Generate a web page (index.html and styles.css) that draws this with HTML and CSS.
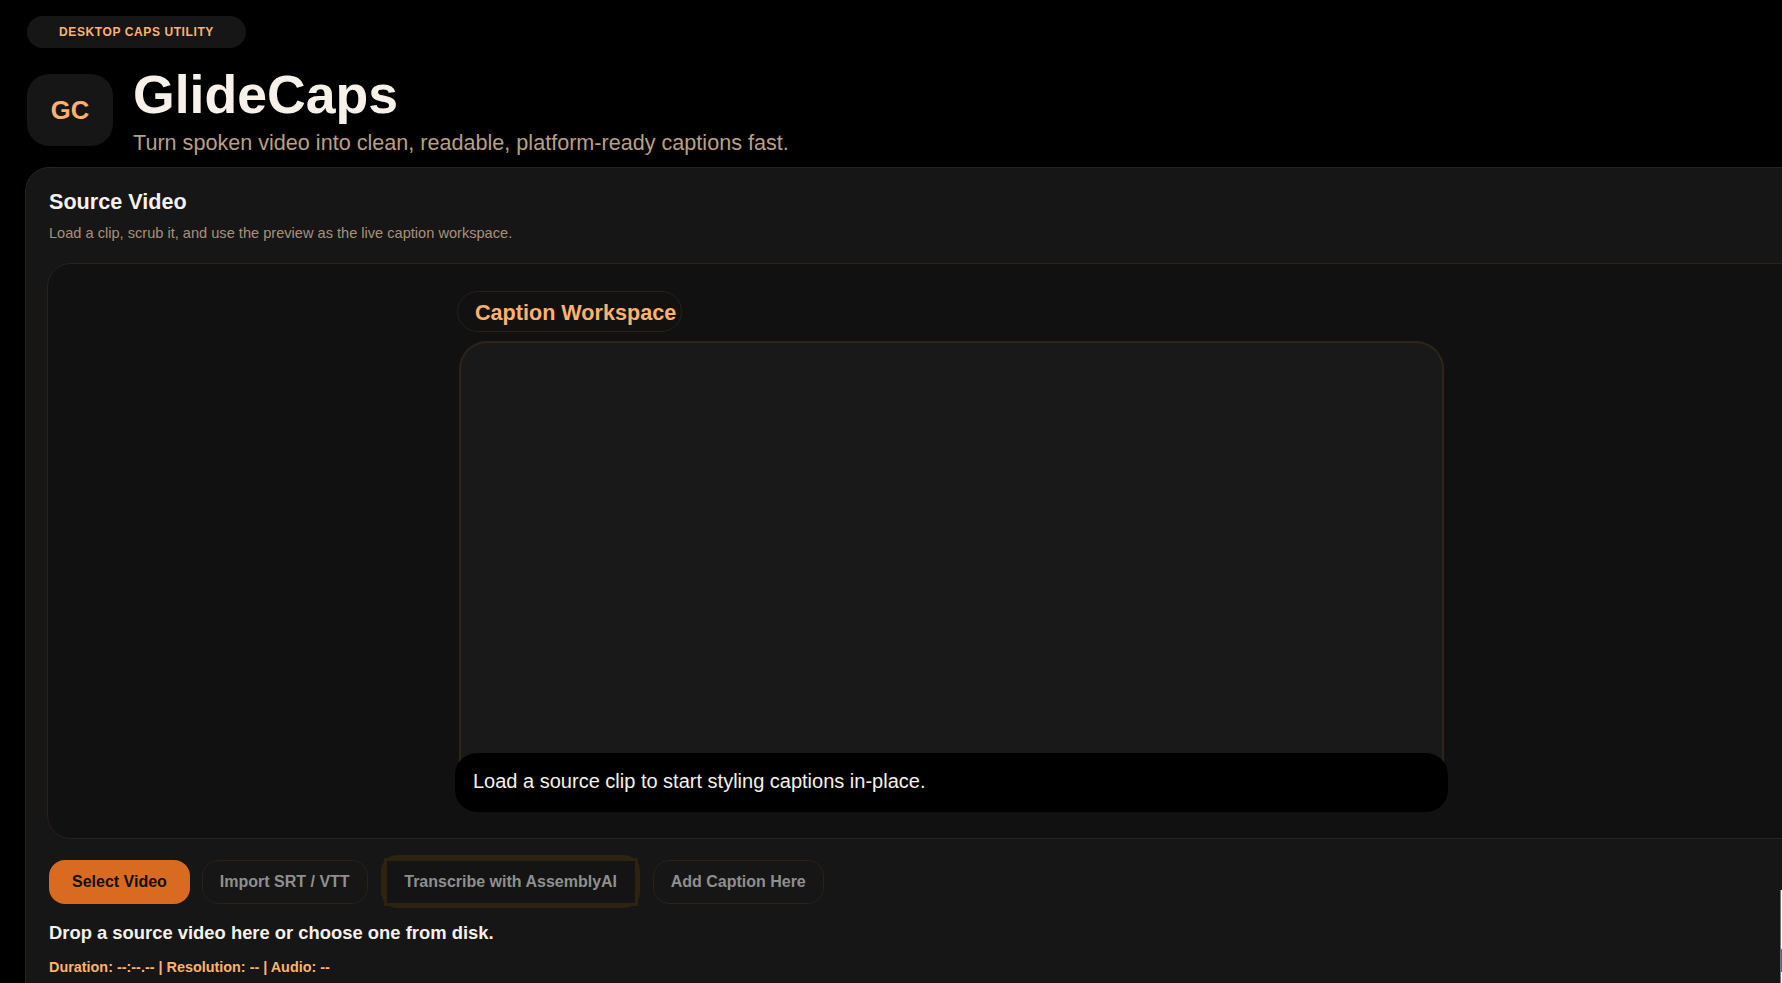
FILE: index.html
```html
<!DOCTYPE html>
<html lang="en">
<head>
<meta charset="utf-8">
<title>GlideCaps</title>
<link rel="stylesheet" href="styles.css">
</head>
<body>
<div class="app">
  <header class="header">
    <div class="eyebrow">DESKTOP CAPS UTILITY</div>
    <div class="brand">
      <div class="logo">GC</div>
      <div class="brand-text">
        <h1 class="title">GlideCaps</h1>
        <p class="subtitle">Turn spoken video into clean, readable, platform-ready captions fast.</p>
      </div>
    </div>
  </header>
  <section class="card">
    <h2 class="card-title">Source Video</h2>
    <p class="card-sub">Load a clip, scrub it, and use the preview as the live caption workspace.</p>
    <div class="stage">
      <div class="workspace">
        <div class="workspace-label">Caption Workspace</div>
        <div class="video"></div>
        <div class="caption">Load a source clip to start styling captions in-place.</div>
      </div>
    </div>
    <div class="actions">
      <button class="btn btn-primary">Select Video</button>
      <button class="btn">Import SRT / VTT</button>
      <button class="btn btn-focus">Transcribe with AssemblyAI</button>
      <button class="btn">Add Caption Here</button>
    </div>
    <p class="drop">Drop a source video here or choose one from disk.</p>
    <p class="meta">Duration: --:--.-- | Resolution: -- | Audio: --</p>
  </section>
</div>
<div class="edge-sliver"><div class="edge-thumb"></div></div>
</body>
</html>
```
FILE: styles.css
```css
* { box-sizing: border-box; }
html, body { margin: 0; height: 100%; overflow: hidden; }
body {
  background: #000;
  color: #f7f1ea;
  font-family: "Liberation Sans", Arial, sans-serif;
}
.app { width: 1900px; padding: 16px 0 0 25px; }
.header { padding-left: 2px; }
.eyebrow {
  width: 219px;
  height: 32px;
  border-radius: 16px;
  background: #161616;
  color: #ffb26b;
  font-size: 12px;
  font-weight: 700;
  letter-spacing: 0.6px;
  line-height: 32px;
  text-align: center;
}
.brand { display: flex; gap: 20px; margin-top: 16px; height: 103px; }
.logo {
  width: 86px;
  height: 72px;
  margin-top: 10px;
  border-radius: 22px;
  background: #161616;
  color: #ffb26b;
  font-size: 25.6px;
  font-weight: 700;
  display: flex;
  align-items: center;
  justify-content: center;
}
.title {
  margin: 0;
  font-size: 53.6px;
  line-height: 60px;
  font-weight: 700;
  color: #f7f1ea;
}
.subtitle {
  margin: 6px 0 0;
  font-size: 21.6px;
  line-height: 26px;
  color: #b89f87;
}
.card {
  width: 1852px;
  height: 900px;
  padding: 20px 22px 20px 23px;
  background: #161616;
  border: 1px solid #2a2118;
  border-radius: 24px;
}
.card-title { margin: 0; font-size: 21.6px; line-height: 28px; font-weight: 700; color: #f7f1ea; }
.card-sub { margin: 8px 0 0; font-size: 14.6px; line-height: 18px; color: #a8917b; }
.stage {
  display: flex;
  justify-content: center;
  height: 576px;
  margin: 21px 0 0 -2px;
  padding-top: 27px;
  background: #111;
  border: 1px solid #2a2118;
  border-radius: 24px;
}
.workspace { width: 993px; margin-left: 2px; display: flex; flex-direction: column; align-items: flex-start; }
.workspace-label {
  height: 41px;
  padding: 0 5px 0 17px;
  margin-left: 2px;
  border: 1px solid #2a2118;
  border-radius: 21px;
  color: #ffb26b;
  font-size: 21.6px;
  font-weight: 700;
  line-height: 42px;
}
.video {
  width: 985px;
  height: 424px;
  margin: 9px 0 0 4px;
  background: #191919;
  border: 2px solid #2f2419;
  border-bottom: 0;
  border-radius: 28px 28px 0 0;
}
.caption {
  width: 993px;
  height: 59px;
  margin-top: -12px;
  padding-left: 18px;
  background: #000;
  border-radius: 22px;
  color: #f7f1ea;
  font-size: 20px;
  line-height: 56px;
  position: relative;
}
.actions { display: flex; gap: 12px; height: 44px; margin-top: 21px; align-items: center; isolation: isolate; }
.btn {
  height: 44px;
  padding: 0 17px;
  background: #161616;
  border: 1px solid #2a2118;
  border-radius: 16px;
  color: #8f8f8f;
  font-family: inherit;
  font-size: 16px;
  font-weight: 700;
}
.btn-primary { border: 0; padding: 0 23px; background: #d96b21; color: #111; }
.btn-focus {
  position: relative;
  width: 254px;
  height: 48px;
  margin: 0 3px 0 4px;
  padding: 0;
  background: #141414;
  border: 3px solid #2e2210;
  border-radius: 0;
}
.btn-focus::before {
  content: "";
  position: absolute;
  inset: -6px -5px -5px -6px;
  z-index: -1;
  border-radius: 16px;
  background: #2e2210;
}
.drop { margin: 18px 0 0; font-size: 18.4px; line-height: 22px; font-weight: 700; color: #f7f1ea; }
.meta { margin: 14px 0 0; font-size: 14.4px; line-height: 18px; font-weight: 700; color: #ffb26b; }
.edge-sliver {
  position: absolute;
  top: 890px;
  right: 0;
  width: 2px;
  height: 93px;
  background: #fff;
  border-left: 1px solid #767676;
}
.edge-thumb { height: 23px; margin-top: 59px; background: #1a73c4; }
```
